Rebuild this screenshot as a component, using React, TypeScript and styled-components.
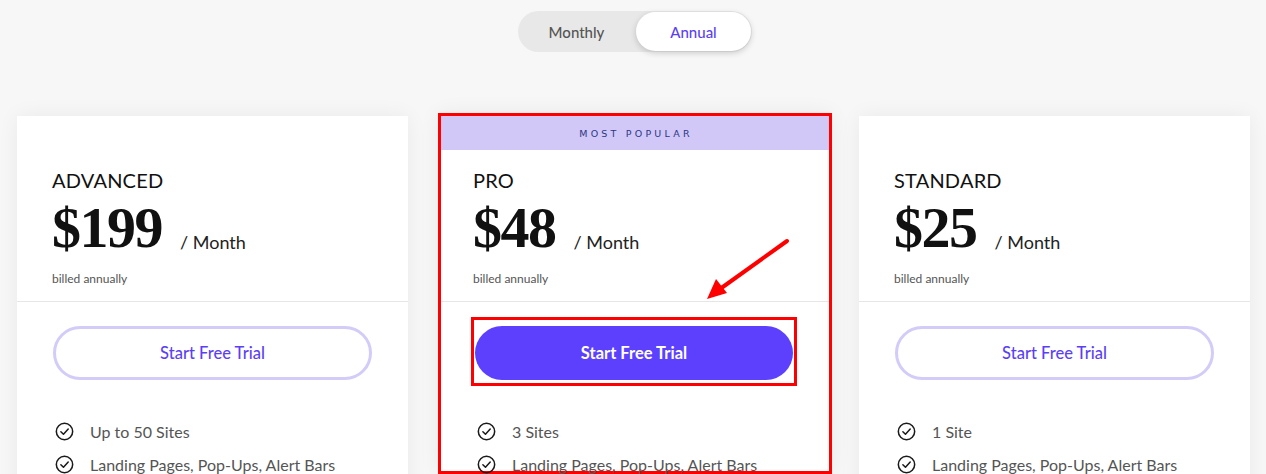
import React from "react";
import styled, { createGlobalStyle } from "styled-components";

const Global = createGlobalStyle`
  html, body { margin: 0; padding: 0; background: #f7f7f7; overflow: hidden; }
  body { font-family: "Lato", "Noto Sans", sans-serif; color: #111; }
  * { box-sizing: border-box; }
`;

const Page = styled.div`
  width: 1266px;
  height: 474px;
  overflow: hidden;
  display: flex;
  flex-direction: column;
  align-items: stretch;
`;

const ToggleWrap = styled.div`
  display: flex;
  justify-content: center;
  padding-top: 11px;
  padding-left: 4px;
`;

const Toggle = styled.div`
  display: flex;
  align-items: center;
  width: 234px;
  height: 41px;
  border-radius: 21px;
  background: #e8e8e8;
  padding: 1px;
`;

const ToggleOption = styled.div<{ $active?: boolean }>`
  flex: 1;
  height: 39px;
  display: flex;
  align-items: center;
  justify-content: center;
  border-radius: 20px;
  font-size: 15px;
  font-weight: 500;
  color: ${(p) => (p.$active ? "#5b3ff6" : "#555")};
  background: ${(p) => (p.$active ? "#fff" : "transparent")};
  box-shadow: ${(p) => (p.$active ? "0 2px 6px rgba(0,0,0,0.18)" : "none")};
  margin-left: ${(p) => (p.$active ? "2px" : "0")};
`;

const Cards = styled.div`
  display: grid;
  grid-template-columns: 391px 391px 391px;
  column-gap: 30px;
  padding-left: 17px;
  margin-top: 64px;
  align-items: start;
`;

const Card = styled.div<{ $featured?: boolean }>`
  position: relative;
  background: #fff;
  height: ${(p) => (p.$featured ? "361px" : "420px")};
  margin: ${(p) => (p.$featured ? "-3px -3px 0 0" : "0")};
  border: ${(p) => (p.$featured ? "3px solid #ff0000" : "none")};
  box-shadow: 0 0 20px rgba(0, 0, 0, 0.06);
`;

const Banner = styled.div`
  height: 34px;
  background: #d1c8f8;
  display: flex;
  align-items: center;
  justify-content: center;
  font-family: "DejaVu Sans", sans-serif;
  font-size: 9.5px;
  letter-spacing: 3.2px;
  color: #2c3785;
  padding-left: 2px;
`;

const Header = styled.div<{ $featured?: boolean }>`
  padding: ${(p) => (p.$featured ? "18px" : "52px")} 35px 0
    ${(p) => (p.$featured ? "32px" : "35px")};
  height: ${(p) => (p.$featured ? "152px" : "186px")};
  border-bottom: 1px solid #e6e6e6;
`;

const Title = styled.h2`
  margin: 0;
  font-size: 20px;
  line-height: 24px;
  font-weight: 400;
  color: #111;
  letter-spacing: 0.2px;
`;

const PriceRow = styled.div`
  display: flex;
  align-items: baseline;
  margin-top: 7px;
  height: 58px;
`;

const Price = styled.span`
  font-family: "Liberation Serif", serif;
  font-weight: 700;
  font-size: 58px;
  line-height: 58px;
  letter-spacing: -1.5px;
  color: #111;
`;

const Per = styled.span`
  margin-left: 18px;
  font-size: 18px;
  color: #222;
  transform: translateY(2px);
`;

const Billed = styled.div`
  margin-top: 14px;
  font-size: 12px;
  color: #555;
`;

const Body = styled.div<{ $featured?: boolean }>`
  padding: 24px 36px 0 ${(p) => (p.$featured ? "34px" : "36px")};
`;

const ButtonFrame = styled.div<{ $featured?: boolean }>`
  padding: ${(p) => (p.$featured ? "6px 1px 3px 1px" : "0")};
  margin: ${(p) => (p.$featured ? "-9px -4px 0 -4px" : "0")};
  border: ${(p) => (p.$featured ? "3px solid #ff0000" : "none")};
`;

const TrialButton = styled.button<{ $primary?: boolean }>`
  display: flex;
  align-items: center;
  justify-content: center;
  width: 100%;
  height: 54px;
  border-radius: 27px;
  cursor: pointer;
  font-family: "Lato", sans-serif;
  font-size: 16.5px;
  font-weight: ${(p) => (p.$primary ? 700 : 500)};
  color: ${(p) => (p.$primary ? "#fff" : "#5b3ff6")};
  background: ${(p) => (p.$primary ? "#5d40fd" : "#fff")};
  border: ${(p) => (p.$primary ? "none" : "3px solid #d3cbf8")};
`;

const Features = styled.ul<{ $featured?: boolean }>`
  list-style: none;
  margin: ${(p) => (p.$featured ? "35px" : "41px")} 0 0;
  padding: 0 0 0 2px;
  display: flex;
  flex-direction: column;
  gap: 13px;
`;

const Feature = styled.li`
  display: flex;
  align-items: center;
  gap: 16px;
  height: 20px;
  font-size: 16px;
  color: #555;
`;

const Arrow = styled.svg`
  position: absolute;
  left: 262px;
  top: 119px;
  overflow: visible;
  pointer-events: none;
`;

const CheckIcon = () => (
  <svg width="19" height="19" viewBox="0 0 20 20" fill="none">
    <circle cx="10" cy="10" r="8.6" stroke="#1a1a1a" strokeWidth="1.6" />
    <path d="M6.2 10.3 L8.9 12.9 L13.9 7.4" stroke="#1a1a1a" strokeWidth="1.6" strokeLinecap="round" strokeLinejoin="round" />
  </svg>
);

type Plan = {
  name: string;
  price: string;
  features: string[];
  featured?: boolean;
};

const plans: Plan[] = [
  { name: "ADVANCED", price: "$199", features: ["Up to 50 Sites", "Landing Pages, Pop-Ups, Alert Bars", "Unlimited Conversions"] },
  { name: "PRO", price: "$48", features: ["3 Sites", "Landing Pages, Pop-Ups, Alert Bars", "Unlimited Conversions"], featured: true },
  { name: "STANDARD", price: "$25", features: ["1 Site", "Landing Pages, Pop-Ups, Alert Bars", "Unlimited Conversions"] },
];

export default function App() {
  return (
    <Page>
      <Global />
      <ToggleWrap>
        <Toggle>
          <ToggleOption>Monthly</ToggleOption>
          <ToggleOption $active>Annual</ToggleOption>
        </Toggle>
      </ToggleWrap>
      <Cards>
        {plans.map((plan) => (
          <Card key={plan.name} $featured={plan.featured}>
            {plan.featured && <Banner>MOST POPULAR</Banner>}
            <Header $featured={plan.featured}>
              <Title>{plan.name}</Title>
              <PriceRow>
                <Price>{plan.price}</Price>
                <Per>/ Month</Per>
              </PriceRow>
              <Billed>billed annually</Billed>
            </Header>
            <Body $featured={plan.featured}>
              <ButtonFrame $featured={plan.featured}>
                <TrialButton $primary={plan.featured}>Start Free Trial</TrialButton>
              </ButtonFrame>
              <Features $featured={plan.featured}>
                {plan.features.map((f) => (
                  <Feature key={f}>
                    <CheckIcon />
                    {f}
                  </Feature>
                ))}
              </Features>
            </Body>
            {plan.featured && (
              <Arrow width="90" height="70" viewBox="0 0 90 70">
                <line x1="84" y1="6" x2="17" y2="54" stroke="#ff0000" strokeWidth="4" strokeLinecap="round" />
                <polygon points="4,64 13,44 24,58" fill="#ff0000" />
              </Arrow>
            )}
          </Card>
        ))}
      </Cards>
    </Page>
  );
}
